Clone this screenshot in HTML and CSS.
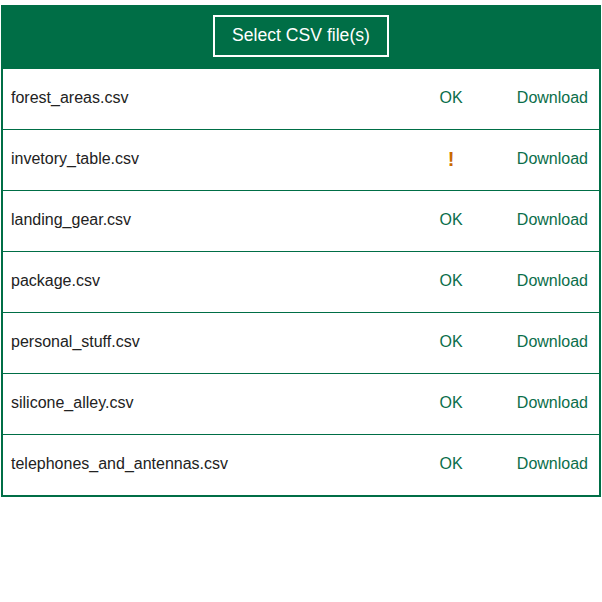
FILE: index.html
```html
<!DOCTYPE html>
<html>
<head>
<meta charset="utf-8">
<link rel="stylesheet" href="styles.css">
</head>
<body>
<div class="panel">
  <div class="header">
    <button class="select-btn">Select CSV file(s)</button>
  </div>
  <div class="rows">
    <div class="row"><span class="name">forest_areas.csv</span><span class="status">OK</span><a class="dl">Download</a></div>
    <div class="row"><span class="name">invetory_table.csv</span><span class="status warn">!</span><a class="dl">Download</a></div>
    <div class="row"><span class="name">landing_gear.csv</span><span class="status">OK</span><a class="dl">Download</a></div>
    <div class="row"><span class="name">package.csv</span><span class="status">OK</span><a class="dl">Download</a></div>
    <div class="row"><span class="name">personal_stuff.csv</span><span class="status">OK</span><a class="dl">Download</a></div>
    <div class="row"><span class="name">silicone_alley.csv</span><span class="status">OK</span><a class="dl">Download</a></div>
    <div class="row"><span class="name">telephones_and_antennas.csv</span><span class="status">OK</span><a class="dl">Download</a></div>
  </div>
</div>
</body>
</html>
```
FILE: styles.css
```css
html, body {
  margin: 0;
  padding: 0;
  background: #fff;
}
body {
  padding: 5px 1px 0 1px;
  font-family: "Liberation Sans", Arial, sans-serif;
}
.panel {
  width: 600px;
  box-sizing: border-box;
  border: 2px solid #006e46;
  border-top: none;
}
.header {
  background: #006e46;
  height: 64px;
  margin: 0 -2px;
  display: flex;
  align-items: center;
  justify-content: center;
  padding-bottom: 2px;
  box-sizing: border-box;
}
.select-btn {
  background: transparent;
  border: 2px solid #fff;
  color: #fff;
  font-family: "Liberation Sans", Arial, sans-serif;
  font-size: 17.6px;
  width: 176px;
  height: 42px;
  padding: 0 0 2px 0;
  cursor: pointer;
}
.row {
  display: grid;
  grid-template-columns: 1fr 60px 107px;
  align-items: center;
  height: 61px;
  box-sizing: border-box;
  padding: 0 11px 2px 8px;
  border-bottom: 1px solid #006e46;
  font-size: 16px;
}
.row:last-child {
  border-bottom: none;
  height: 60px;
}
.name {
  color: #222;
}
.status {
  text-align: center;
  color: #0b6e4a;
}
.status.warn {
  color: #c96a00;
  font-weight: bold;
  font-size: 20px;
}
.dl {
  text-align: right;
  color: #0b6e4a;
  cursor: pointer;
}
```
